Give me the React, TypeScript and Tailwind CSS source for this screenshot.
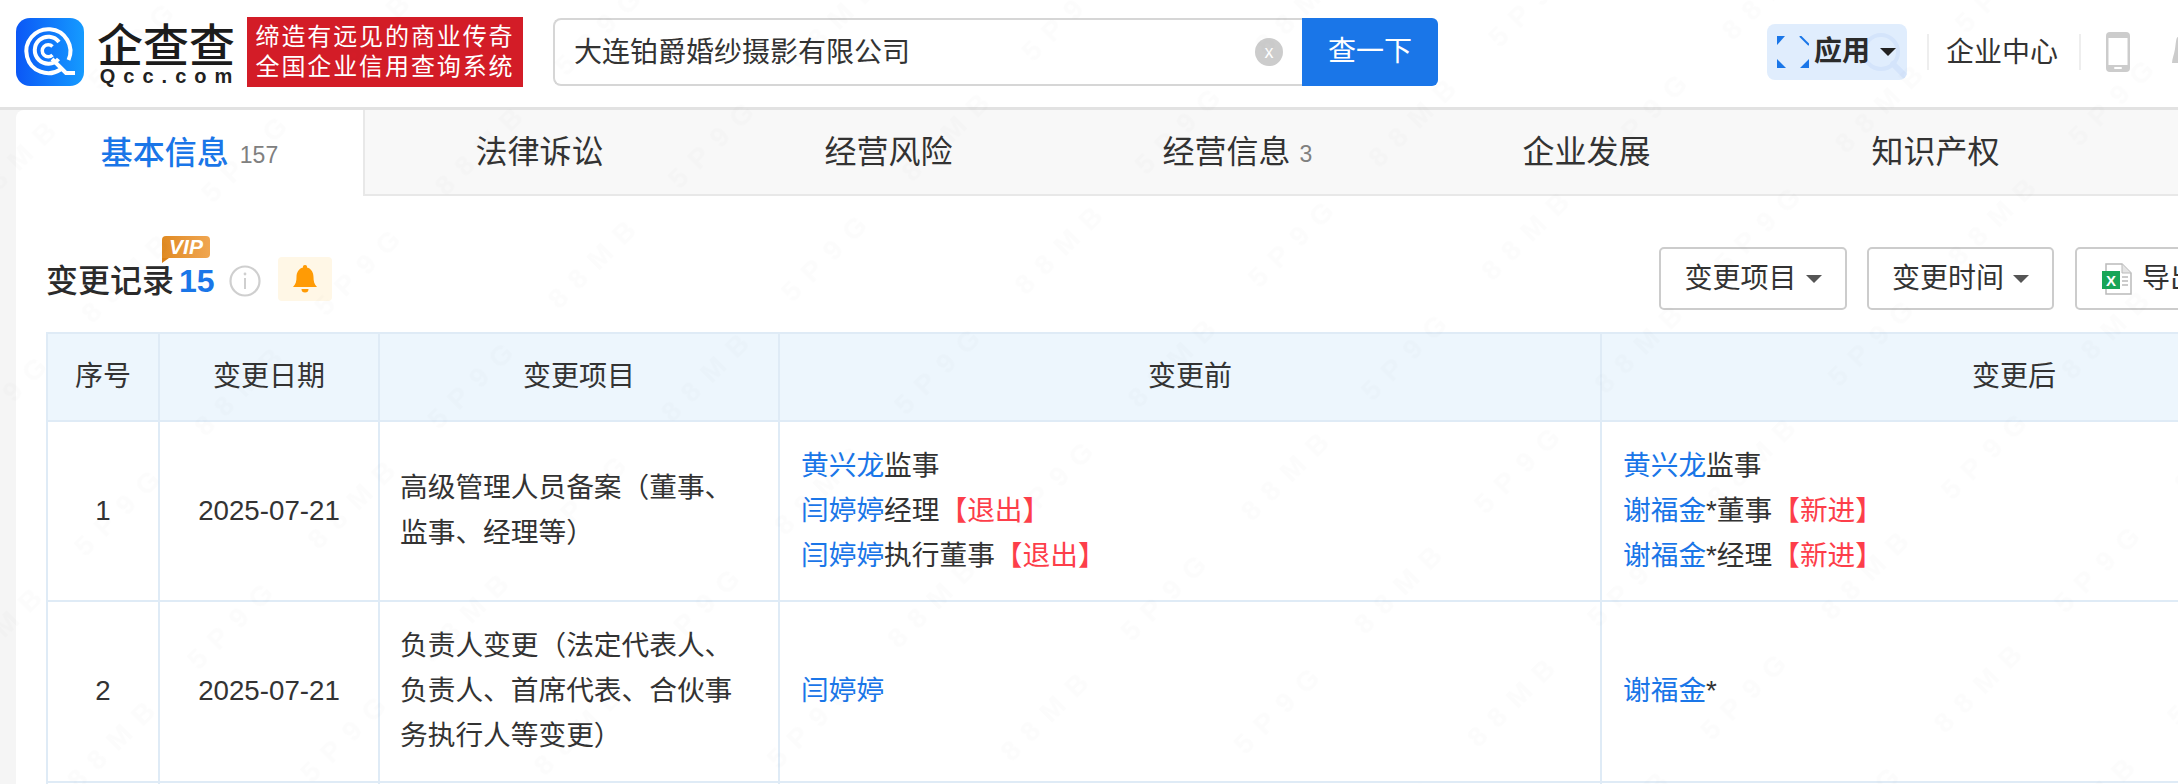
import React from "react";

const Link = ({ children }: { children: React.ReactNode }) => <span className="text-[#1a76e8]">{children}</span>;
const Red = ({ children }: { children: React.ReactNode }) => <span className="text-[#fd3e4a]">{children}</span>;

const Caret = ({ color }: { color: string }) => (
  <svg width="16" height="8" viewBox="0 0 16 8" className="shrink-0">
    <path d="M0 0H16L8 8Z" fill={color} />
  </svg>
);

const LogoIcon = () => (
  <svg width="68" height="68" viewBox="0 0 68 68" className="shrink-0">
    <defs>
      <linearGradient id="lg" x1="0" y1="0" x2="1" y2="0">
        <stop offset="0" stopColor="#0b57f6" />
        <stop offset="1" stopColor="#159bff" />
      </linearGradient>
    </defs>
    <rect width="68" height="68" rx="14" fill="url(#lg)" />
    <g fill="none" stroke="#fff" strokeWidth="4">
      <path d="M44.5 51.5A22 22 0 1 1 52.5 42" />
      <path d="M42.5 41A13.5 13.5 0 1 1 43 24" />
      <path d="M36.5 28.5A6 6 0 1 0 36.5 37" strokeWidth="3.5" />
      <path d="M36 41L50 55H59" strokeWidth="4" />
    </g>
  </svg>
);

const TabItem = ({ label, badge, active }: { label: string; badge?: string; active?: boolean }) => (
  <div
    className={
      active
        ? "w-[349px] shrink-0 flex items-center justify-center gap-[11px] bg-white rounded-tl-[8px] border-r-2 border-[#e8e8e8]"
        : "w-[349px] shrink-0 flex items-center justify-center gap-[9px] bg-[#f8f8f8] border-b-2 border-[#e8e8e8]"
    }
  >
    <span className={active ? "text-[32px] font-medium text-[#1a76e8]" : "text-[32px] text-[#333333]"}>{label}</span>
    {badge && <span className="text-[23px] text-[#808080] mt-[4px]">{badge}</span>}
  </div>
);

const FilterButton = ({ label, className }: { label: string; className: string }) => (
  <div className={"h-[63px] shrink-0 flex items-center justify-center gap-[9px] border-2 border-[#cccccc] rounded-[5px] text-[28px] text-[#333333] " + className}>
    {label}
    <Caret color="#555555" />
  </div>
);

const thClass = "border-l-2 border-t-2 border-[#dfebf6] bg-[#edf6fd] font-normal text-[28px] text-[#333333] text-center align-middle";
const tdClass = "border-l-2 border-t-2 border-[#dfebf6] text-[27.7px] leading-[45px] text-[#333333] align-middle pb-[2px]";

export default function App() {
  return (
    <div className="relative w-[2178px] h-[784px] overflow-hidden bg-[#f5f5f5] font-['Liberation_Sans','Noto_Sans_CJK_SC',sans-serif]">
      {/* header */}
      <header className="h-[110px] bg-white border-b-[3px] border-[#e2e2e2] flex items-center pl-[16px] pb-[3px] overflow-hidden">
        <LogoIcon />
        <div className="w-[140px] ml-[12px] shrink-0 flex flex-col items-center">
          <span className="text-[46px] leading-[48px] font-medium whitespace-nowrap text-[#1c1c1c] font-['Noto_Sans_CJK_SC',sans-serif]">企查查</span>
          <span className="text-[20px] leading-[20px] font-bold tracking-[8px] whitespace-nowrap text-[#222222] ml-[8px]">Qcc.com</span>
        </div>
        <div className="ml-[11px] w-[276px] h-[70px] shrink-0 bg-[#d31c27] text-white text-[24px] leading-[30px] tracking-[1.9px] flex flex-col items-center justify-center">
          <span>缔造有远见的商业传奇</span>
          <span>全国企业信用查询系统</span>
        </div>
        <div className="ml-[30px] w-[885px] h-[68px] shrink-0 flex">
          <div className="flex-1 flex items-center border-2 border-r-0 border-[#d6d6d6] rounded-l-[8px] pl-[19px] pr-[19px] text-[28px] text-[#333333]">
            <span className="flex-1 mt-[2px]">大连铂爵婚纱摄影有限公司</span>
            <span className="w-[28px] h-[28px] rounded-full bg-[#cccccc] text-white text-[18px] leading-none flex items-center justify-center">x</span>
          </div>
          <div className="w-[136px] bg-[#1a76e8] rounded-r-[6px] text-white text-[28px] flex items-center justify-center">查一下</div>
        </div>
        <div className="relative ml-[329px] w-[140px] h-[56px] shrink-0 rounded-[8px] bg-[#e0edfd] flex items-center pl-[10px] overflow-hidden">
          <svg width="60" height="60" viewBox="0 0 60 60" className="absolute left-[92px] top-[6px]" fill="none" stroke="#d4e4fb" strokeWidth="4">
            <circle cx="22" cy="22" r="17" />
            <path d="M34 34L46 46" strokeWidth="6" strokeLinecap="round" />
          </svg>
          <svg width="32" height="32" viewBox="0 0 32 32" className="relative shrink-0">
            <path d="M0 0H8L0 9ZM0 23L9 32H0ZM32 23V32H23Z" fill="#1a76e8" />
            <path d="M23 0L32 9" stroke="#1a76e8" strokeWidth="2" />
          </svg>
          <span className="relative ml-[5px] text-[28px] font-bold text-[#2b2b2b]">应用</span>
          <span className="relative ml-[10px]"><Caret color="#222222" /></span>
        </div>
        <div className="ml-[20px] w-[2px] h-[36px] bg-[#eeeeee] shrink-0" />
        <span className="ml-[17px] text-[28px] mt-[2px] text-[#333333] shrink-0">企业中心</span>
        <div className="ml-[21px] w-[2px] h-[36px] bg-[#eeeeee] shrink-0" />
        <svg width="24" height="40" viewBox="0 0 24 40" className="ml-[25px] shrink-0">
          <rect width="24" height="40" rx="4" fill="#cccccc" />
          <rect x="2.5" y="6" width="19" height="27" fill="#ffffff" />
          <rect x="8" y="35" width="8" height="2" rx="1" fill="#ffffff" />
        </svg>
        <svg width="20" height="30" viewBox="0 0 20 30" className="ml-[42px] shrink-0">
          <path d="M6 0C4 0 4 6 3 12C2 18 0 22 0 26H20V0Z" fill="#cccccc" />
        </svg>
      </header>

      {/* card */}
      <main className="ml-[16px] w-[2450px] h-[674px] bg-white">
        <div className="flex h-[86px] w-[2450px] bg-[#f5f5f5]">
          <TabItem label="基本信息" badge="157" active />
          <TabItem label="法律诉讼" />
          <TabItem label="经营风险" />
          <TabItem label="经营信息" badge="3" />
          <TabItem label="企业发展" />
          <TabItem label="知识产权" />
          <div className="flex-1 bg-[#f8f8f8] border-b-2 border-[#e8e8e8]" />
        </div>

        <div className="flex items-center h-[63px] mt-[51px] pl-[30px]">
          <div className="relative w-[1613px] shrink-0 flex items-center">
            <span className="text-[32px] font-medium text-[#2b2b2b] mt-[4px]">变更记录</span>
            <span className="text-[32px] font-bold text-[#1a76e8] ml-[5px] mt-[4px]">15</span>
            <svg width="32" height="32" viewBox="0 0 32 32" className="ml-[14px] mt-[4px]" fill="none">
              <circle cx="16" cy="16" r="14.5" stroke="#cfcfcf" strokeWidth="2.2" />
              <path d="M16 13V24" stroke="#cfcfcf" strokeWidth="2" />
              <circle cx="16" cy="9" r="1.4" fill="#cfcfcf" />
            </svg>
            <div className="ml-[17px] w-[54px] h-[44px] rounded-[4px] bg-[#fff7e6] flex items-center justify-center">
              <svg width="24" height="28" viewBox="0 0 24 28">
                <path d="M12 0a2 2 0 0 1 2 2.4C18.5 3.6 20.5 7.5 20.5 12c0 4 .6 7 3.5 10H0c2.9-3 3.5-6 3.5-10 0-4.5 2-8.4 6.5-9.6A2 2 0 0 1 12 0Z" fill="#ff9b05" />
                <path d="M8.5 24h7a3.5 3.5 0 0 1-7 0Z" fill="#ff9b05" />
              </svg>
            </div>
            <div className="absolute left-[116px] top-[-17px] w-[48px] h-[22px] rounded-[4px] rounded-bl-none bg-gradient-to-r from-[#e08a20] to-[#f0a650] flex items-center justify-center text-white text-[21px] leading-none font-bold italic">
              VIP
              <span className="absolute left-0 top-[22px] border-t-[5px] border-r-[7px] border-t-[#d97f16] border-r-transparent" />
            </div>
          </div>
          <FilterButton label="变更项目" className="w-[188px]" />
          <FilterButton label="变更时间" className="w-[187px] ml-[20px]" />
          <div className="ml-[21px] w-[180px] h-[63px] shrink-0 flex items-center pl-[25px] gap-[10px] border-2 border-[#cccccc] rounded-[5px] text-[28px] text-[#333333]">
            <svg width="30" height="32" viewBox="0 0 30 32" className="shrink-0">
              <path d="M4 1H20L29 10V31H4Z" fill="#ffffff" stroke="#bbbbbb" strokeWidth="1.5" />
              <path d="M20 1V10H29" fill="#e5e5e5" stroke="#bbbbbb" strokeWidth="1" />
              <path d="M20 14H26M20 18H26M20 22H26" stroke="#bbbbbb" strokeWidth="1.5" />
              <rect x="0" y="8" width="18" height="18" fill="#18a558" />
              <text x="9" y="22.5" textAnchor="middle" fill="#ffffff" fontSize="15" fontWeight="700" fontFamily="Liberation Sans">X</text>
            </svg>
            导出
          </div>
        </div>

        <table className="mt-[22px] ml-[30px] w-[2380px] table-fixed border-separate border-spacing-0">
          <colgroup>
            <col className="w-[112px]" />
            <col className="w-[220px]" />
            <col className="w-[400px]" />
            <col className="w-[822px]" />
            <col className="w-[826px]" />
          </colgroup>
          <thead>
            <tr className="h-[88px]">
              <th className={thClass}>序号</th>
              <th className={thClass}>变更日期</th>
              <th className={thClass}>变更项目</th>
              <th className={thClass}>变更前</th>
              <th className={thClass}>变更后</th>
            </tr>
          </thead>
          <tbody>
            <tr className="h-[180px]">
              <td className={tdClass + " text-center"}>1</td>
              <td className={tdClass + " text-center"}>2025-07-21</td>
              <td className={tdClass + " pl-[20px] pr-[28px]"}>高级管理人员备案（董事、监事、经理等）</td>
              <td className={tdClass + " pl-[21px]"}>
                <div><Link>黄兴龙</Link>监事</div>
                <div><Link>闫婷婷</Link>经理<Red>【退出】</Red></div>
                <div><Link>闫婷婷</Link>执行董事<Red>【退出】</Red></div>
              </td>
              <td className={tdClass + " pl-[21px]"}>
                <div><Link>黄兴龙</Link>监事</div>
                <div><Link>谢福金</Link>*董事<Red>【新进】</Red></div>
                <div><Link>谢福金</Link>*经理<Red>【新进】</Red></div>
              </td>
            </tr>
            <tr className="h-[181px]">
              <td className={tdClass + " text-center"}>2</td>
              <td className={tdClass + " text-center"}>2025-07-21</td>
              <td className={tdClass + " pl-[20px] pr-[28px]"}>负责人变更（法定代表人、负责人、首席代表、合伙事务执行人等变更）</td>
              <td className={tdClass + " pl-[21px]"}><Link>闫婷婷</Link></td>
              <td className={tdClass + " pl-[21px]"}><Link>谢福金</Link>*</td>
            </tr>
            <tr className="h-[90px]">
              <td className={tdClass} />
              <td className={tdClass} />
              <td className={tdClass} />
              <td className={tdClass} />
              <td className={tdClass} />
            </tr>
          </tbody>
        </table>
      </main>

      {/* watermark: a faint repeating drawing over the page */}
      <svg width="2178" height="784" className="absolute left-0 top-0 pointer-events-none">
        <defs>
          <pattern id="wm" patternUnits="userSpaceOnUse" width="340" height="160" patternTransform="rotate(-45) translate(0 60)">
            <text x="6" y="75" fontSize="28" fontWeight="700" letterSpacing="12" fontFamily="Liberation Sans" fill="#000000" fillOpacity="0.012">5P9G</text>
            <text x="176" y="75" fontSize="28" fontWeight="700" letterSpacing="12" fontFamily="Liberation Sans" fill="#000000" fillOpacity="0.012">88MB</text>
          </pattern>
        </defs>
        <rect width="2178" height="784" fill="url(#wm)" />
      </svg>
    </div>
  );
}
